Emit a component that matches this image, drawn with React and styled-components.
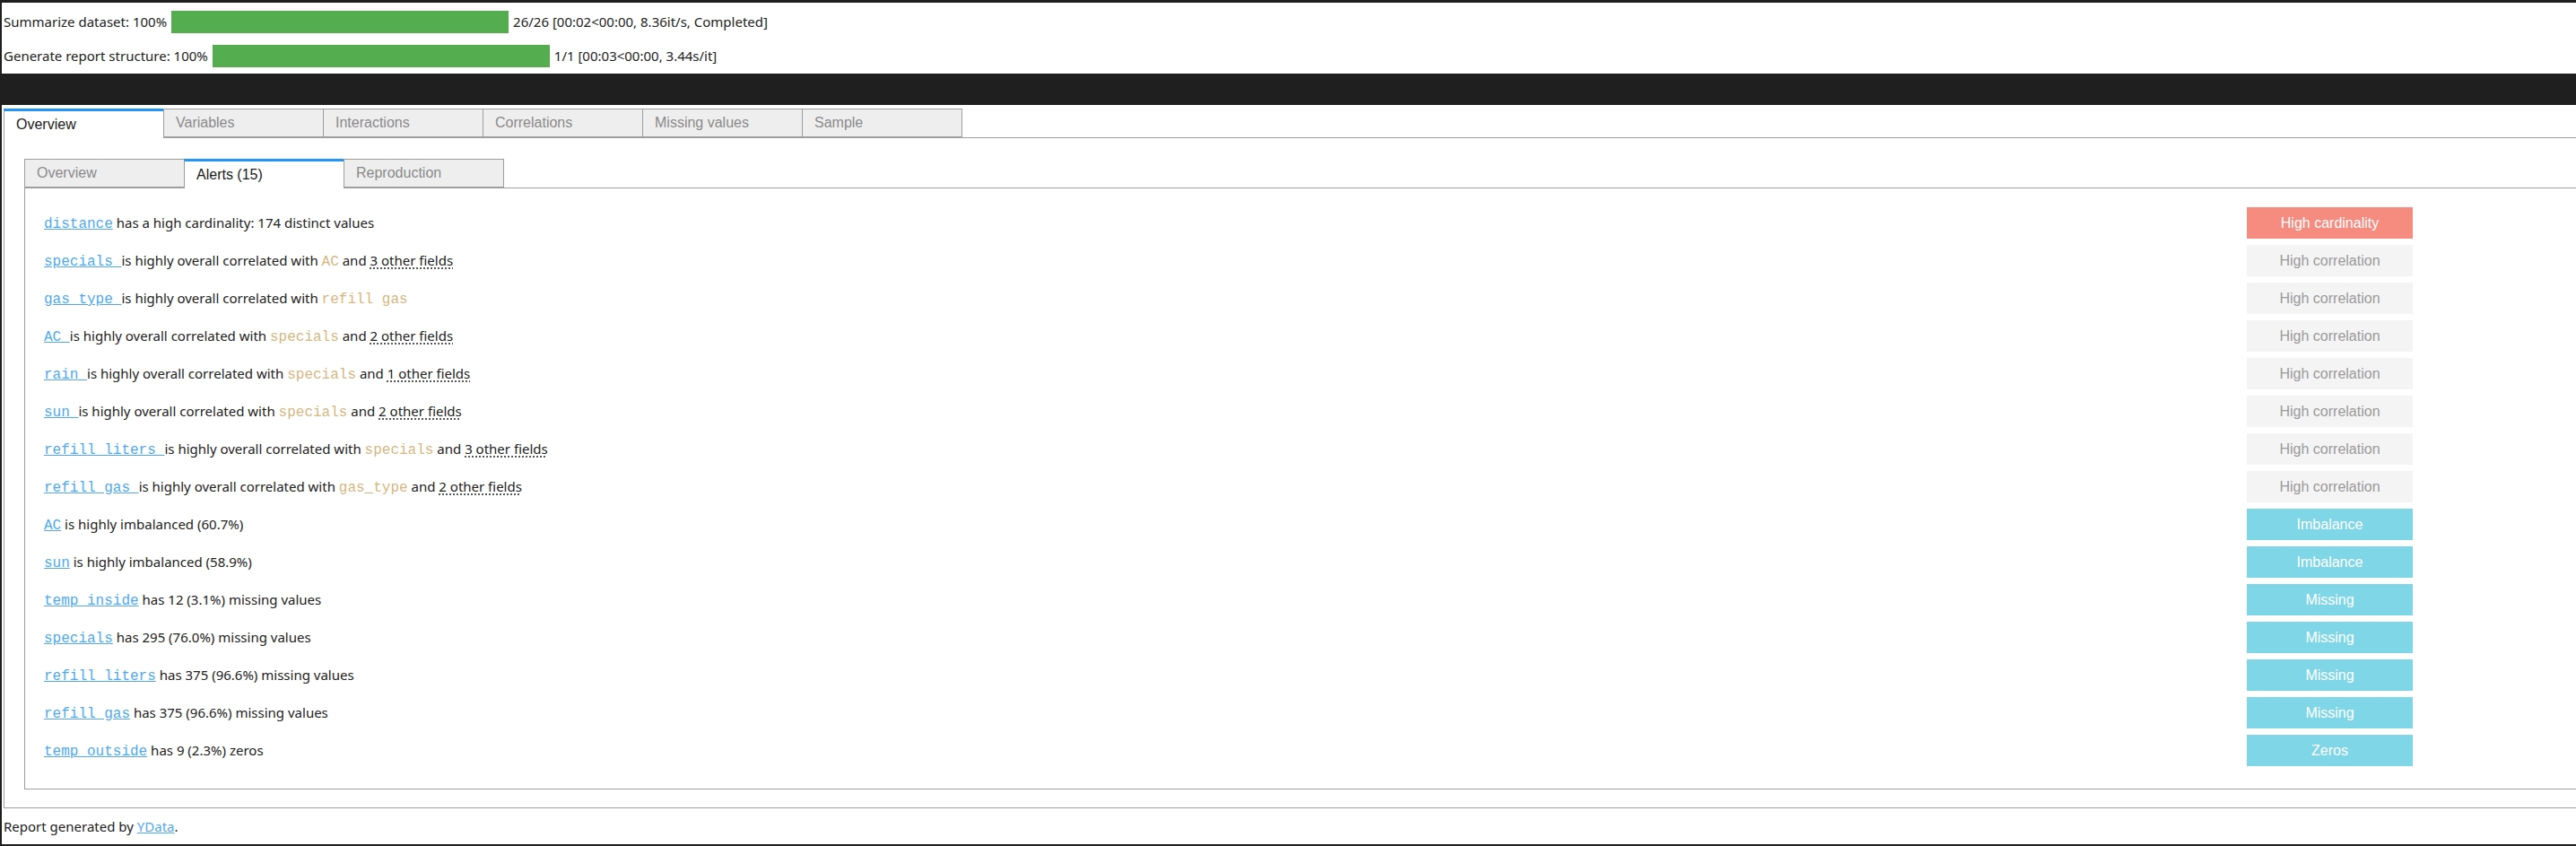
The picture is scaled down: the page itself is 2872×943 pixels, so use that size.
import React from "react";
import styled, { createGlobalStyle } from "styled-components";

const GlobalStyle = createGlobalStyle`
  html, body {
    margin: 0;
    padding: 0;
    background: #ffffff;
    overflow: hidden;
  }
  * {
    box-sizing: border-box;
  }
`;

const SANS = `"Noto Sans", "Open Sans", sans-serif`;
const ARIAL = `"Liberation Sans", Arial, sans-serif`;
const MONO = `"Liberation Mono", "Courier New", monospace`;

const outerTabs = ["Overview", "Variables", "Interactions", "Correlations", "Missing values", "Sample"];
const innerTabs = ["Overview", "Alerts (15)", "Reproduction"];

const progress = [
  { label: "Summarize dataset: 100%", info: "26/26 [00:02<00:00, 8.36it/s, Completed]" },
  { label: "Generate report structure: 100%", info: "1/1 [00:03<00:00, 3.44s/it]" },
];

const alerts = [
  { field: "distance", text: [" has a high cardinality: 174 distinct values"], kind: "cardinality", label: "High cardinality" },
  { field: "specials ", text: ["is highly overall correlated with ", { code: "AC" }, " and ", { more: "3 other fields" }], kind: "correlation", label: "High correlation" },
  { field: "gas_type ", text: ["is highly overall correlated with ", { code: "refill gas" }], kind: "correlation", label: "High correlation" },
  { field: "AC ", text: ["is highly overall correlated with ", { code: "specials" }, " and ", { more: "2 other fields" }], kind: "correlation", label: "High correlation" },
  { field: "rain ", text: ["is highly overall correlated with ", { code: "specials" }, " and ", { more: "1 other fields" }], kind: "correlation", label: "High correlation" },
  { field: "sun ", text: ["is highly overall correlated with ", { code: "specials" }, " and ", { more: "2 other fields" }], kind: "correlation", label: "High correlation" },
  { field: "refill liters ", text: ["is highly overall correlated with ", { code: "specials" }, " and ", { more: "3 other fields" }], kind: "correlation", label: "High correlation" },
  { field: "refill gas ", text: ["is highly overall correlated with ", { code: "gas_type" }, " and ", { more: "2 other fields" }], kind: "correlation", label: "High correlation" },
  { field: "AC", text: [" is highly imbalanced (60.7%)"], kind: "info", label: "Imbalance" },
  { field: "sun", text: [" is highly imbalanced (58.9%)"], kind: "info", label: "Imbalance" },
  { field: "temp_inside", text: [" has 12 (3.1%) missing values"], kind: "info", label: "Missing" },
  { field: "specials", text: [" has 295 (76.0%) missing values"], kind: "info", label: "Missing" },
  { field: "refill liters", text: [" has 375 (96.6%) missing values"], kind: "info", label: "Missing" },
  { field: "refill gas", text: [" has 375 (96.6%) missing values"], kind: "info", label: "Missing" },
  { field: "temp_outside", text: [" has 9 (2.3%) zeros"], kind: "info", label: "Zeros" },
];

const badgeColors = {
  cardinality: { bg: "#f68b80", fg: "#ffffff" },
  correlation: { bg: "#f4f4f4", fg: "#9a9a9a" },
  info: { bg: "#7fd6e6", fg: "#ffffff" },
};

const Frame = styled.div`
  width: 2872px;
  height: 943px;
  border-top: 3px solid #1f1f1f;
  border-left: 2px solid #1f1f1f;
  border-bottom: 2px solid #1f1f1f;
  display: flex;
  flex-direction: column;
  overflow: hidden;
  font-family: ${SANS};
  color: #222;
`;

const ProgressArea = styled.div`
  padding: 2px 0 1px 2px;
`;

const ProgressRow = styled.div`
  height: 38px;
  display: flex;
  align-items: center;
  font-size: 15px;
  white-space: nowrap;
`;

const Bar = styled.div`
  width: 376px;
  height: 25px;
  background: #54ae50;
  margin: 0 5px;
`;

const DarkBand = styled.div`
  height: 35px;
  background: #1f1f1f;
`;

const TabWidget = styled.div`
  margin: 4px -40px 0 2px;
`;

const TabBar = styled.div`
  display: flex;
  align-items: flex-end;
  height: 33px;
  border-bottom: 1px solid #9e9e9e;
  padding-left: ${(p) => p.$indent || 0}px;
`;

const Tab = styled.div`
  width: 179px;
  margin-left: -1px;
  display: flex;
  align-items: center;
  padding: 0 13px;
  font-family: ${ARIAL};
  font-size: 16px;
  white-space: nowrap;
  border: 1px solid #9e9e9e;
  background: ${(p) => (p.$active ? "#ffffff" : "#eeeeee")};
  color: ${(p) => (p.$active ? "#1a1a1a" : "#8a8a8a")};
  height: ${(p) => (p.$active ? "33px" : "32px")};
  margin-bottom: ${(p) => (p.$active ? "-1px" : "0")};
  border-bottom: ${(p) => (p.$active ? "none" : "1px solid #9e9e9e")};
  border-top: ${(p) => (p.$active ? "3px solid #2196f3" : "1px solid #9e9e9e")};
  &:first-child {
    margin-left: 0;
  }
`;

const Panel = styled.div`
  border: 1px solid #9e9e9e;
  border-top: none;
  padding: ${(p) => p.$pad};
`;

const AlertList = styled.div`
  width: 2641px;
  display: flex;
  flex-direction: column;
  gap: 7px;
`;

const AlertRow = styled.div`
  height: 35px;
  display: flex;
  align-items: center;
  justify-content: space-between;
`;

const AlertText = styled.div`
  font-size: 15px;
  white-space: pre;
  color: #222;
`;

const FieldLink = styled.a`
  font-family: ${MONO};
  font-size: 16px;
  color: #4ea8f6;
  text-decoration: underline;
`;

const Code = styled.span`
  font-family: ${MONO};
  font-size: 16px;
  color: #d6b680;
`;

const More = styled.abbr`
  text-decoration: underline dotted;
  text-underline-offset: 3px;
`;

const Badge = styled.div`
  width: 185px;
  height: 35px;
  display: flex;
  align-items: center;
  justify-content: center;
  font-family: ${ARIAL};
  font-size: 16px;
  background: ${(p) => badgeColors[p.$kind].bg};
  color: ${(p) => badgeColors[p.$kind].fg};
`;

const Footer = styled.div`
  height: 40px;
  display: flex;
  align-items: center;
  padding-left: 2px;
  font-size: 15px;
  a {
    color: #4ea8f6;
    text-decoration: underline;
  }
`;

function renderPart(part, i) {
  if (typeof part === "string") return <React.Fragment key={i}>{part}</React.Fragment>;
  if (part.code) return <Code key={i}>{part.code}</Code>;
  return <More key={i}>{part.more}</More>;
}

export default function App() {
  return (
    <>
      <GlobalStyle />
      <Frame>
        <ProgressArea>
          {progress.map((p) => (
            <ProgressRow key={p.label}>
              {p.label}
              <Bar />
              {p.info}
            </ProgressRow>
          ))}
        </ProgressArea>
        <DarkBand />
        <TabWidget>
          <TabBar>
            {outerTabs.map((t, i) => (
              <Tab key={t} $active={i === 0}>
                {t}
              </Tab>
            ))}
          </TabBar>
          <Panel $pad="23px 22px 20px 22px">
            <TabBar>
              {innerTabs.map((t, i) => (
                <Tab key={t} $active={i === 1}>
                  {t}
                </Tab>
              ))}
            </TabBar>
            <Panel $pad="21px 21px 25px 21px">
              <AlertList>
                {alerts.map((a, i) => (
                  <AlertRow key={i}>
                    <AlertText>
                      <FieldLink>{a.field}</FieldLink>
                      {a.text.map(renderPart)}
                    </AlertText>
                    <Badge $kind={a.kind}>{a.label}</Badge>
                  </AlertRow>
                ))}
              </AlertList>
            </Panel>
          </Panel>
        </TabWidget>
        <Footer>
          Report generated by&nbsp;<a>YData</a>.
        </Footer>
      </Frame>
    </>
  );
}
